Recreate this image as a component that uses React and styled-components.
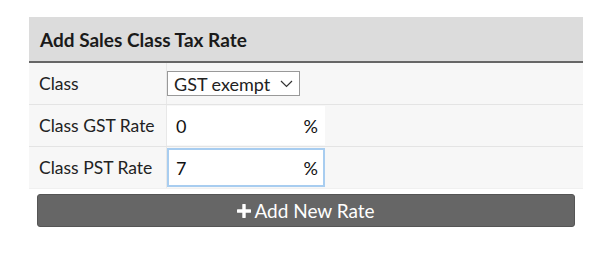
import React from "react";
import styled, { createGlobalStyle } from "styled-components";

const GlobalStyle = createGlobalStyle`
  body {
    margin: 0;
    background: #ffffff;
    font-family: Lato, "Open Sans", "Liberation Sans", sans-serif;
    color: #222;
  }
`;

const Page = styled.div`
  padding: 17px 17px 0 29px;
`;

const Panel = styled.div`
  width: 554px;
  display: flex;
  flex-direction: column;
`;

const Header = styled.div`
  height: 44px;
  display: flex;
  align-items: center;
  padding-left: 11px;
  background: #dcdcdc;
  border-bottom: 2px solid #666;
  font-size: 19px;
  font-weight: 700;
  color: #1a1a1a;
`;

const Row = styled.div`
  display: grid;
  grid-template-columns: 138px 1fr;
  height: 42px;
  box-sizing: border-box;
  background: #f7f7f7;
  border-bottom: 1px solid ${(p) => (p.last ? "#f0f0f0" : "#e4e4e4")};
`;

const Label = styled.div`
  display: flex;
  align-items: center;
  padding-left: 10px;
  border-right: 1px solid #e8e8e8;
  font-size: 17.5px;
  color: #222;
`;

const Cell = styled.div`
  display: flex;
  align-items: ${(p) => (p.fill ? "stretch" : "center")};
  padding: ${(p) => (p.fill ? "1px 0 1px 0" : "0")};
`;

const Select = styled.div`
  display: flex;
  align-items: center;
  gap: 10px;
  height: 25px;
  box-sizing: border-box;
  padding: 0 6px 0 6px;
  background: #fff;
  border: 1px solid #999;
  font-size: 18px;
  color: #222;
`;

const RateBox = styled.div`
  width: 158px;
  box-sizing: border-box;
  display: flex;
  align-items: center;
  justify-content: space-between;
  padding: 0 5px 0 7px;
  background: #fff;
  border: 2px solid ${(p) => (p.focused ? "#a8cdf0" : "#fff")};
  font-size: 18px;
  color: #111;
`;

const Button = styled.div`
  margin: 5px 8px 0 8px;
  height: 33px;
  box-sizing: border-box;
  display: flex;
  align-items: center;
  justify-content: center;
  gap: 3px;
  background: #666;
  border: 1px solid #555;
  border-radius: 3px;
  color: #fff;
  font-size: 19px;
`;

const Chevron = () => (
  <svg width="13" height="8" viewBox="0 0 13 8">
    <path d="M1 1 L6.5 6.5 L12 1" fill="none" stroke="#333" strokeWidth="1.2" />
  </svg>
);

const Plus = () => (
  <svg width="14" height="14" viewBox="0 0 14 14">
    <path d="M7 1 V13 M1 7 H13" stroke="#fff" strokeWidth="3.4" strokeLinecap="round" />
  </svg>
);

export default function App() {
  return (
    <Page>
      <GlobalStyle />
      <Panel>
        <Header>Add Sales Class Tax Rate</Header>
        <Row>
          <Label>Class</Label>
          <Cell>
            <Select>
              GST exempt
              <Chevron />
            </Select>
          </Cell>
        </Row>
        <Row>
          <Label>Class GST Rate</Label>
          <Cell fill>
            <RateBox>
              <span>0</span>
              <span>%</span>
            </RateBox>
          </Cell>
        </Row>
        <Row last>
          <Label>Class PST Rate</Label>
          <Cell fill>
            <RateBox focused>
              <span>7</span>
              <span>%</span>
            </RateBox>
          </Cell>
        </Row>
        <Button>
          <Plus />
          Add New Rate
        </Button>
      </Panel>
    </Page>
  );
}
